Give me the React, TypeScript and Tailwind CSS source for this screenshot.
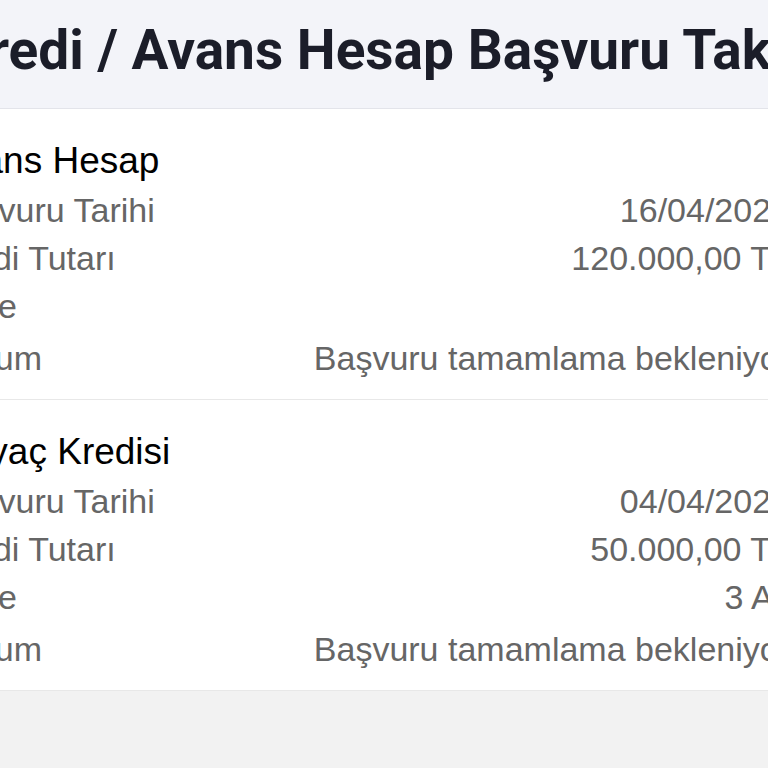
const items = [
  {
    title: "Avans Hesap",
    date: "16/04/2024",
    amount: "120.000,00 TL",
    term: "",
    status: "Başvuru tamamlama bekleniyor",
  },
  {
    title: "İhtiyaç Kredisi",
    date: "04/04/2024",
    amount: "50.000,00 TL",
    term: "3 Ay",
    status: "Başvuru tamamlama bekleniyor",
  },
]

function Row({ label, value, className = "" }: { label: string; value: string; className?: string }) {
  return (
    <div className={`flex justify-between items-center h-[48px] leading-[48px] text-[34px] text-[#666666] ${className}`}>
      <span>{label}</span>
      <span>{value}</span>
    </div>
  )
}

export default function App() {
  return (
    <div className="w-[768px] h-[768px] overflow-hidden bg-[#f2f2f2]">
      <header className="h-[109px] bg-[#f3f4f9] border-b border-[#e3e4ea] overflow-hidden">
        <h1
          className="ml-[-46px] pt-[23px] whitespace-nowrap text-[55px] leading-[55px] font-bold text-[#1b1d29]"
          style={{ fontFamily: "Roboto, 'Noto Sans', sans-serif" }}
        >
          Kredi / Avans Hesap Başvuru Takibi
        </h1>
      </header>

      <div className="ml-[-60px] w-[850px]" style={{ fontFamily: "'Liberation Sans', Arial, sans-serif" }}>
        {items.map((item, i) => (
          <section key={i} className="bg-white border-b border-[#e8e8e8] pt-[28px] pb-[17px]">
            <div className="h-[48px] leading-[48px] mb-[1px] text-[37px] text-black">{item.title}</div>
            <Row label="Başvuru Tarihi" value={item.date} />
            <Row label="Kredi Tutarı" value={item.amount} />
            <Row label="Vade" value={item.term} />
            <Row label="Durum" value={item.status} className="mt-[4px]" />
          </section>
        ))}
      </div>
    </div>
  )
}
